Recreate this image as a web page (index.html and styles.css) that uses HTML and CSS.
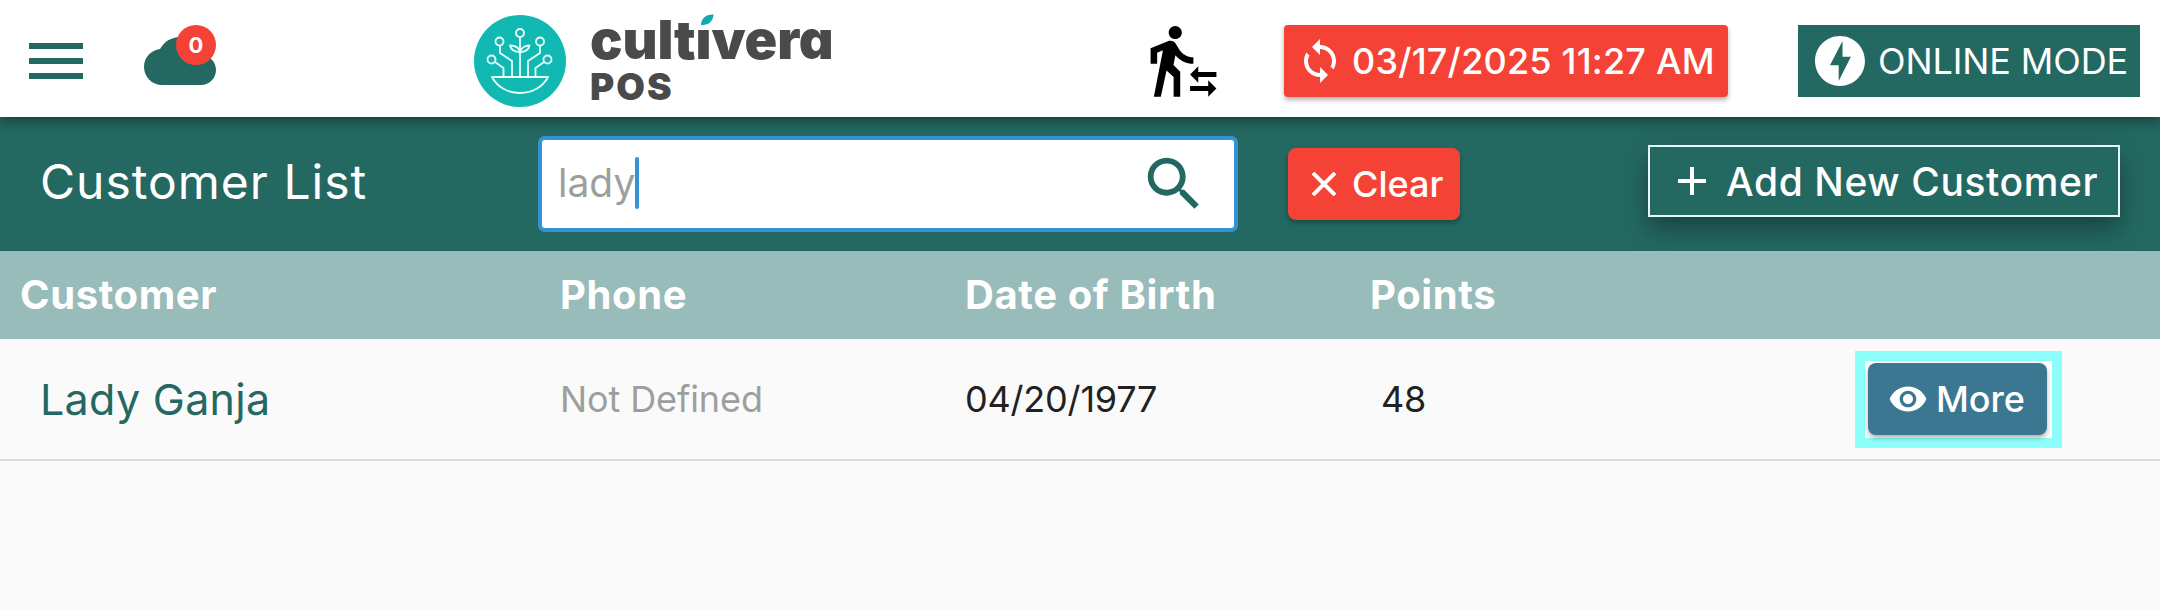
FILE: index.html
```html
<!doctype html>
<html lang="en">

<head>
    <meta charset="utf-8">
    <title>Customer List</title>
    <link rel="stylesheet" href="styles.css">
</head>

<body>
    <header class="topbar">
        <div class="menu">
            <span></span>
            <span></span>
            <span></span>
        </div>

        <div class="cloud">
            <svg width="72" height="72" viewBox="0 0 24 24">
                <path d="M19.35 10.04C18.67 6.59 15.64 4 12 4 9.11 4 6.6 5.64 5.35 8.04 2.34 8.36 0 10.91 0 14c0 3.31 2.69 6 6 6h13c2.76 0 5-2.24 5-5 0-2.64-2.05-4.78-4.65-4.96z" />
            </svg>
            <span class="badge">0</span>
        </div>

        <div class="logo">
            <svg class="logo-mark" width="92" height="92" viewBox="0 0 92 92">
                <circle cx="46" cy="46" r="46" fill="#12b9b3" />
                <g fill="none" stroke="#e9fffd" stroke-width="1.8" stroke-linejoin="round">
                    <circle cx="46" cy="18" r="4" />
                    <circle cx="25.500" cy="26.500" r="4" />
                    <circle cx="66" cy="26.500" r="4" />
                    <circle cx="17.500" cy="44.500" r="4" />
                    <circle cx="73.500" cy="44.500" r="4" />
                    <path d="M46 22v40M26 30.500v7.500l12 8v16M66 30.500v7.500l-12 8v16M21 47l8.500 6v9M70 47l-8.500 6v9" />
                    <path d="M46 37c-1-4-5-6.500-10-6.500 1 4.500 5 6.500 10 6.500zM46 37c1-4 5-6.500 9.500-6.500-1 4.500-5 6.500-9.500 6.500z" />
                    <path d="M18 62h56c-5 9.500-15 16-28 16s-23-6.500-28-16z" />
                </g>
            </svg>
            <div class="wordmark">
                <div class="name">cultivera
                    <svg class="leaf" width="18" height="14" viewBox="0 0 18 14">
                        <path d="M3 12C3 5.500 8 1 15.500 1.500c0 6-4.500 11-12.500 10.500z" fill="#12a9b0" />
                    </svg>
                </div>
                <div class="pos">POS</div>
            </div>
        </div>

        <svg class="transfer" width="79" height="79" viewBox="0 0 24 24">
            <path d="M16.490 15.500v-1.750L14 16.250l2.490 2.500V17H22v-1.500zM19.510 19.750H14v1.500h5.510V23L22 20.500 19.510 18zM9.500 5.500c1.100 0 2-.9 2-2s-.9-2-2-2-2 .9-2 2 .9 2 2 2zM5.750 8.900L3 23h2.100l1.750-8L9 17v6h2v-7.550L8.950 13.400l.6-3C10.850 12 12.800 13 15 13v-2c-1.850 0-3.450-1-4.350-2.450l-.95-1.600C9.350 6.350 8.700 6 8 6c-.25 0-.5.05-.75.15L2 8.300V13h2V9.650z" />
        </svg>

        <button class="btn sync">
            <svg width="48" height="48" viewBox="0 0 24 24">
                <path d="M12 4V1L8 5l4 4V6c3.310 0 6 2.690 6 6 0 1.010-.25 1.970-.7 2.800l1.460 1.460C19.540 15.030 20 13.570 20 12c0-4.420-3.580-8-8-8zm0 14c-3.310 0-6-2.690-6-6 0-1.010.25-1.970.7-2.800L5.240 7.740C4.460 8.970 4 10.430 4 12c0 4.420 3.580 8 8 8v3l4-4-4-4v3z" />
            </svg>
            <span>03/17/2025 11:27 AM</span>
        </button>

        <div class="mode">
            <svg width="60" height="60" viewBox="0 0 24 24">
                <path d="M12 2.020c-5.510 0-9.980 4.470-9.980 9.980s4.470 9.980 9.980 9.980 9.980-4.470 9.980-9.980S17.510 2.020 12 2.020zM11.480 20v-6.260H8L13 4v6.260h3.350L11.480 20z" />
            </svg>
            <span>ONLINE MODE</span>
        </div>
    </header>

    <section class="toolbar">
        <h1>Customer List</h1>
        <div class="search">
            <span class="query">lady</span>
            <span class="caret"></span>
            <svg width="70" height="70" viewBox="0 0 24 24">
                <path d="M15.500 14h-.79l-.28-.27C15.410 12.590 16 11.110 16 9.500 16 5.910 13.090 3 9.500 3S3 5.910 3 9.500 5.910 16 9.500 16c1.610 0 3.090-.59 4.230-1.570l.27.28v.79l5 4.990L20.490 19l-4.990-5zm-6 0C7.010 14 5 11.990 5 9.500S7.010 5 9.500 5 14 7.010 14 9.500 11.990 14 9.500 14z" />
            </svg>
        </div>
        <button class="btn clear">
            <svg width="24" height="24" viewBox="0 0 24 24">
                <path d="M1 1l22 22M23 1L1 23" />
            </svg>
            <span>Clear</span>
        </button>
        <button class="btn add">
            <svg width="28" height="28" viewBox="0 0 28 28">
                <path d="M14 0v28M0 14h28" />
            </svg>
            <span>Add New Customer</span>
        </button>
    </section>

    <div class="row head">
        <div>Customer</div>
        <div>Phone</div>
        <div>Date of Birth</div>
        <div>Points</div>
    </div>

    <div class="row customer">
        <div class="customer-name">Lady Ganja</div>
        <div class="phone">Not Defined</div>
        <div class="dob">04/20/1977</div>
        <div class="points">48</div>
        <div class="highlight">
            <button class="btn more">
                <svg width="40" height="40" viewBox="0 0 24 24">
                    <path d="M12 4.500C7 4.500 2.730 7.610 1 12c1.730 4.390 6 7.500 11 7.500s9.270-3.110 11-7.500c-1.730-4.390-6-7.500-11-7.500zM12 17c-2.760 0-5-2.240-5-5s2.240-5 5-5 5 2.240 5 5-2.240 5-5 5zm0-8c-1.660 0-3 1.340-3 3s1.340 3 3 3 3-1.340 3-3-1.340-3-3-3z" />
                </svg>
                <span>More</span>
            </button>
        </div>
    </div>
</body>

</html>
```
FILE: styles.css
```css
* {
    box-sizing: border-box;
}

body {
    margin: 0;
    height: 609px;
    overflow: hidden;
    background-color: #fafafa;
    font-family: Inter, "Liberation Sans", sans-serif;
    font-size: 36px;
    white-space: nowrap;
}

svg {
    display: block;
    flex: none;
    fill: currentColor;
}

.topbar {
    position: relative;
    z-index: 1;
    display: flex;
    height: 117px;
    background-color: #fff;
    box-shadow: 0 4px 14px rgba(0, 0, 0, 0.4);
}

.menu {
    display: flex;
    flex-direction: column;
    gap: 9px;
    width: 54px;
    margin: 43px 0 0 29px;
}

.menu span {
    height: 6px;
    background-color: #246862;
}

.cloud {
    position: relative;
    margin: 25px 0 0 61px;
    color: #246862;
}

.badge {
    position: absolute;
    top: 0;
    right: 0;
    width: 40px;
    height: 40px;
    border-radius: 50%;
    background-color: #f44336;
    color: #fff;
    font-size: 22px;
    font-weight: 700;
    line-height: 41px;
    text-align: center;
}

.logo {
    display: flex;
    width: 362px;
    margin: 0 0 0 258px;
}

.logo-mark {
    margin-top: 15px;
}

.wordmark {
    margin: 7px 0 0 24px;
    color: #4a4a4a;
    font-weight: 900;
}

.name {
    position: relative;
    height: 63px;
    font-size: 54px;
    line-height: 66px;
    letter-spacing: -0.1px;
    font-feature-settings: "cv11";
}

/* takes the place of the dot of the i */
.leaf {
    position: absolute;
    top: 6px;
    left: 108px;
    background-color: #fff;
}

.pos {
    font-size: 37px;
    line-height: 33px;
    letter-spacing: 2px;
}

.transfer {
    margin: 21px 0 0 308px;
}

.btn {
    display: flex;
    align-items: center;
    height: 72px;
    padding: 0;
    border: 0;
    border-radius: 8px;
    color: #fff;
    font: 500 36px Inter, "Liberation Sans", sans-serif;
    box-shadow: 0 3px 5px rgba(0, 0, 0, 0.3);
}

.sync {
    width: 444px;
    margin: 25px 0 0 61px;
    padding-left: 12px;
    gap: 8px;
    border-radius: 4px;
    background-color: #f44336;
    letter-spacing: 0.2px;
}

.mode {
    display: flex;
    align-items: center;
    gap: 8px;
    width: 342px;
    height: 72px;
    margin: 25px 0 0 70px;
    padding-left: 12px;
    background-color: #246862;
    color: #fff;
    letter-spacing: -0.1px;
}

.toolbar {
    display: flex;
    height: 134px;
    padding-left: 40px;
    background-color: #246862;
    color: #fff;
}

h1 {
    width: 498px;
    margin: 35px 0 0;
    font-size: 48px;
    font-weight: 400;
    line-height: 60px;
    letter-spacing: 1px;
}

.search {
    display: flex;
    align-items: center;
    width: 700px;
    height: 96px;
    margin-top: 19px;
    padding: 0 25px 0 16px;
    border: 4px solid #3592d8;
    border-radius: 7px;
    background-color: #fff;
    color: #9e9e9e;
    font-size: 39px;
}

.query {
    padding-bottom: 4px;
}

.caret {
    width: 4px;
    height: 52px;
    margin-bottom: 2px;
    border-radius: 2px;
    background-color: #3592d8;
}

.search svg {
    margin-left: auto;
    color: #246862;
}

.clear {
    width: 172px;
    margin: 31px 0 0 50px;
    padding-left: 24px;
    gap: 16px;
    background-color: #f44336;
}

.clear svg,
.add svg {
    stroke: currentColor;
    stroke-width: 4;
}

.add {
    width: 472px;
    margin: 28px 0 0 188px;
    padding-left: 28px;
    gap: 20px;
    border: 2px solid #e6f7f5;
    border-radius: 0;
    background-color: #246862;
    font-size: 39px;
    letter-spacing: 0.6px;
    box-shadow: 0 12px 24px rgba(0, 0, 0, 0.35);
}

.row {
    display: grid;
    grid-template-columns: 540px 405px 405px 485px 1fr;
    align-items: center;
    padding-left: 20px;
}

.head {
    position: relative;
    z-index: 1;
    height: 88px;
    padding-bottom: 2px;
    background-color: #97bcba;
    color: #fff;
    font-size: 40px;
    font-weight: 700;
    letter-spacing: 0.6px;
}

.customer {
    height: 122px;
    border-bottom: 2px solid #dcdcdc;
}

.customer-name {
    padding-left: 20px;
    color: #246862;
    font-size: 43px;
    letter-spacing: 0.3px;
}

.phone {
    color: #9e9e9e;
    letter-spacing: -0.1px;
}

.dob,
.points {
    color: #212121;
    letter-spacing: -0.2px;
}

.points {
    padding-left: 11px;
}

.highlight {
    width: 207px;
    height: 97px;
    padding: 2px 3px;
    border: 10px solid #8cfffa;
    background-color: #fff;
}

.more {
    width: 179px;
    padding-left: 20px;
    gap: 8px;
    background-color: #3b7791;
}
```
